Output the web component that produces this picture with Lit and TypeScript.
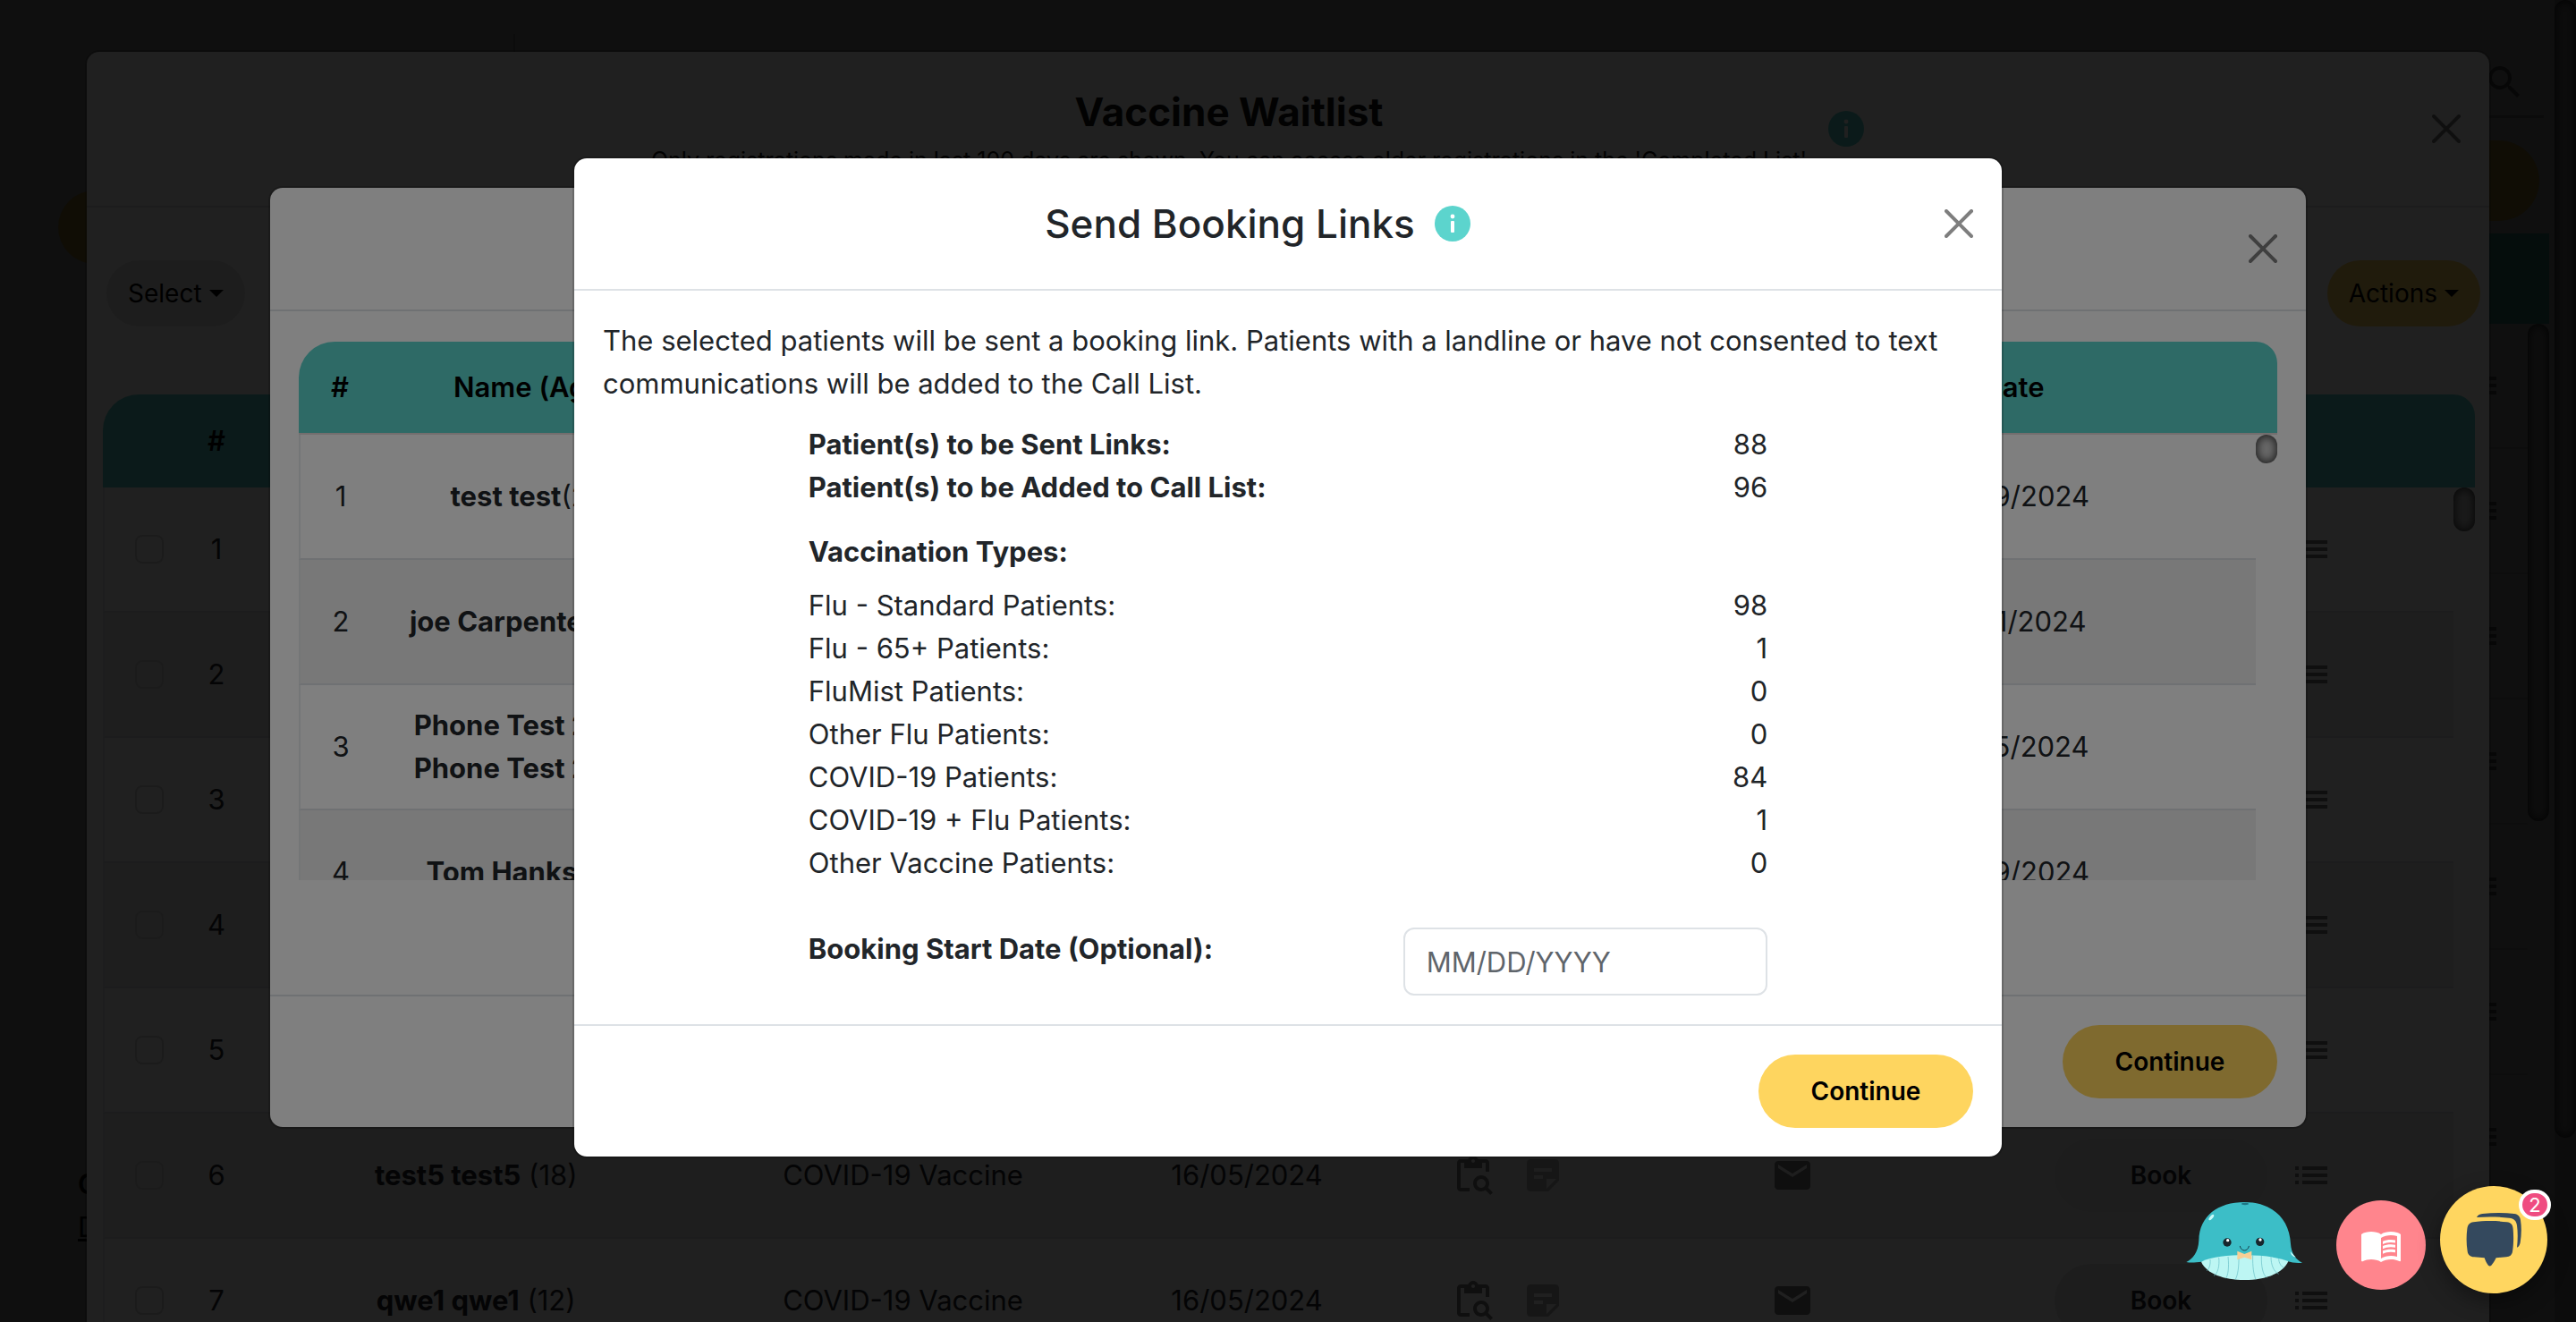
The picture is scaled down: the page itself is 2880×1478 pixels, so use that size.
import { LitElement, html, css, svg, nothing } from "lit";
import { customElement } from "lit/decorators.js";

const PATHS: Record<string, string> = {
  clipboard:
    "M5 5h2v3h10V5h2v5h2V5c0-1.1-.9-2-2-2h-4.18C14.4 1.84 13.3 1 12 1S9.6 1.84 9.18 3H5c-1.1 0-2 .9-2 2v14c0 1.1.9 2 2 2h5v-2H5V5zm7-2c.55 0 1 .45 1 1s-.45 1-1 1-1-.45-1-1 .45-1 1-1zM20.3 18.9c.4-.7.7-1.5.7-2.4 0-2.5-2-4.5-4.5-4.5S12 14 12 16.5s2 4.5 4.5 4.5c.9 0 1.7-.3 2.4-.7l2.7 2.7 1.4-1.4-2.7-2.7zm-3.8.1c-1.4 0-2.5-1.1-2.5-2.5s1.1-2.5 2.5-2.5 2.5 1.1 2.5 2.5-1.1 2.5-2.5 2.5z",
  note: "M19 3H4.99C3.89 3 3 3.9 3 5v14c0 1.1.89 2 1.99 2H15l6-6V5c0-1.1-.9-2-2-2zM7 8h10v2H7V8zm5 6H7v-2h5v2zm2 5.5V14h5.5L14 19.5z",
  mail: "M20 4H4c-1.1 0-1.99.9-1.99 2L2 18c0 1.1.9 2 2 2h16c1.1 0 2-.9 2-2V6c0-1.1-.9-2-2-2zm0 4l-8 5-8-5V6l8 5 8-5v2z",
  list: "M3 13h2v-2H3v2zm0 4h2v-2H3v2zm0-8h2V7H3v2zm4 4h14v-2H7v2zm0 4h14v-2H7v2zM7 7v2h14V7H7z",
  search:
    "M15.5 14h-.79l-.28-.27C15.41 12.59 16 11.11 16 9.5 16 5.91 13.09 3 9.5 3S3 5.91 3 9.5 5.91 16 9.5 16c1.61 0 3.09-.59 4.23-1.57l.27.28v.79l5 4.99L20.49 19l-4.99-5zm-6 0C7.01 14 5 11.99 5 9.5S7.01 5 9.5 5 14 7.01 14 9.5 11.99 14 9.5 14z",
  book: "M21 5c-1.11-.35-2.33-.5-3.5-.5-1.95 0-4.05.4-5.5 1.5-1.45-1.1-3.55-1.5-5.5-1.5S2.45 4.9 1 6v14.65c0 .25.25.5.5.5.1 0 .15-.05.25-.05C3.1 20.45 5.05 20 6.5 20c1.95 0 4.05.4 5.5 1.5 1.35-.85 3.8-1.5 5.5-1.5 1.65 0 3.35.3 4.75 1.05.1.05.15.05.25.05.25 0 .5-.25.5-.5V6c-.6-.45-1.25-.75-2-1zm0 13.5c-1.1-.35-2.3-.5-3.5-.5-1.7 0-4.15.65-5.5 1.5V8c1.35-.85 3.8-1.5 5.5-1.5 1.2 0 2.4.15 3.5.5v11.5zM17.5 10.5c.88 0 1.73.09 2.5.26V9.24c-.79-.15-1.64-.24-2.5-.24-1.7 0-3.24.29-4.5.83v1.66c1.13-.64 2.7-.99 4.5-.99zM13 12.49v1.66c1.13-.64 2.7-.99 4.5-.99.88 0 1.73.09 2.5.26V11.9c-.79-.15-1.64-.24-2.5-.24-1.7 0-3.24.3-4.5.83zM17.5 14.33c-1.7 0-3.24.29-4.5.83v1.66c1.13-.64 2.7-.99 4.5-.99.88 0 1.73.09 2.5.26v-1.52c-.79-.16-1.64-.24-2.5-.24z",
};

const icon = (name: string, cls = "") => svg`
  <svg class="icon ${cls}" viewBox="0 0 24 24" aria-hidden="true"><path d=${PATHS[name]}></path></svg>`;

const closeButton = html`<button class="close" aria-label="Close">
  <svg viewBox="0 0 16 16" aria-hidden="true">
    <path d="M.293.293a1 1 0 0 1 1.414 0L8 6.586 14.293.293a1 1 0 1 1 1.414 1.414L9.414 8l6.293 6.293a1 1 0 0 1-1.414 1.414L8 9.414l-6.293 6.293a1 1 0 0 1-1.414-1.414L6.586 8 .293 1.707a1 1 0 0 1 0-1.414z"></path>
  </svg>
</button>`;

const infoButton = html`<button class="info" aria-label="Information">
  <svg viewBox="0 0 40 40" aria-hidden="true">
    <circle class="disc" cx="20" cy="20" r="20"></circle>
    <circle class="mark" cx="20" cy="12" r="2.4"></circle>
    <rect class="mark" x="18" y="17" width="4" height="13" rx="1"></rect>
  </svg>
</button>`;

interface Waiting {
  n: number;
  name?: string;
  age?: number;
  vaccine?: string;
  date?: string;
}

const WAITLIST: Waiting[] = [
  { n: 1 },
  { n: 2 },
  { n: 3 },
  { n: 4 },
  { n: 5 },
  { n: 6, name: "test5 test5", age: 18, vaccine: "COVID-19 Vaccine", date: "16/05/2024" },
  { n: 7, name: "qwe1 qwe1", age: 12, vaccine: "COVID-19 Vaccine", date: "16/05/2024" },
];

const SELECTED = [
  { n: 1, name: ["test test"], age: "(24)", date: "19/09/2024" },
  { n: 2, name: ["joe Carpenter"], age: " (36)", date: "21/01/2024" },
  { n: 3, name: ["Phone Test 2 (24)", "Phone Test 2 (24)"], age: "", date: "15/05/2024" },
  { n: 4, name: ["Tom Hanks"], age: " (45)", date: "19/09/2024" },
];

const COUNTS = [
  { label: "Flu - Standard Patients:", value: 98 },
  { label: "Flu - 65+ Patients:", value: 1 },
  { label: "FluMist Patients:", value: 0 },
  { label: "Other Flu Patients:", value: 0 },
  { label: "COVID-19 Patients:", value: 84 },
  { label: "COVID-19 + Flu Patients:", value: 1 },
  { label: "Other Vaccine Patients:", value: 0 },
];

const base = css`
  * {
    box-sizing: border-box;
  }
  button {
    font: inherit;
    color: inherit;
    border: 0;
    padding: 0;
    background: none;
  }
  h2,
  h3,
  p,
  dl,
  dd {
    margin: 0;
  }
  .icon {
    width: 48px;
    height: 48px;
    display: block;
    fill: #777;
  }
  .modal {
    background: #fff;
    background-clip: padding-box;
    border: 2px solid rgba(0, 0, 0, 0.175);
    border-radius: 16px;
    display: flex;
    flex-direction: column;
  }
  .header {
    display: flex;
    align-items: center;
    gap: 20px;
    border-bottom: 2px solid #dee2e6;
    padding: 0 32px;
  }
  .title {
    flex: 1;
    display: flex;
    align-items: center;
    justify-content: center;
    gap: 22px;
    font-weight: 500;
    font-size: 44px;
    line-height: 60px;
  }
  .close {
    width: 64px;
    height: 64px;
    margin-right: -16px;
    padding: 16px;
    opacity: 0.5;
  }
  .close svg,
  .info svg {
    display: block;
    width: 100%;
    height: 100%;
    fill: #000;
  }
  .info {
    width: 40px;
    height: 40px;
  }
  .info .disc {
    fill: #5cd4cd;
  }
  .info .mark {
    fill: #fff;
  }
  .footer {
    display: flex;
    justify-content: flex-end;
    border-top: 2px solid #dee2e6;
    padding: 32px;
  }
  .primary {
    width: 240px;
    height: 82px;
    border-radius: 41px;
    background: #fed55f;
    color: #000;
    font-weight: 600;
    font-size: 28px;
  }
  table {
    width: 100%;
    table-layout: fixed;
    border-collapse: separate;
    border-spacing: 0;
  }
  th,
  td {
    padding: 0;
    text-align: center;
  }
  th {
    height: 104px;
    background: #5cd4cd;
    color: #000;
    font-weight: 600;
  }
  th:first-child {
    border-top-left-radius: 40px;
  }
  th:last-child {
    border-top-right-radius: 40px;
  }
  td {
    height: 140px;
    border-bottom: 2px solid #dee2e6;
  }
  td strong {
    font-weight: 700;
  }
  td:first-child {
    border-left: 2px solid #e9ecef;
  }
  tbody tr:nth-child(even) td {
    background: #f0f0f0;
  }
  tbody tr td:last-child {
    background: none;
    border: 0;
  }
  .gutter {
    width: 24px;
  }
  .thumb {
    position: absolute;
    right: 0;
    top: 104px;
    width: 24px;
    height: 32px;
    border-radius: 12px;
    background: #d0d0d0;
    box-shadow: inset 0 0 10px 2px #444;
  }
`;

@customElement("clinic-page")
class ClinicPage extends LitElement {
  static styles = [
    base,
    css`
      :host {
        display: flex;
        height: 100%;
        background: #f4f4f4;
        color: #000;
      }
      .side {
        width: 574px;
        display: flex;
        flex-direction: column;
        justify-content: space-between;
        padding: 213px 0 82px 65px;
      }
      .pill {
        width: 240px;
        height: 90px;
        border-radius: 45px;
        background: #fed55f;
      }
      .side .pill {
        height: 82px;
      }
      .links {
        display: flex;
        flex-direction: column;
        padding-left: 22px;
        line-height: 48px;
      }
      .links strong {
        font-weight: 600;
      }
      .links a {
        color: inherit;
      }
      .main {
        flex: 1;
        display: flex;
        flex-direction: column;
        align-items: stretch;
        position: relative;
        padding-right: 6px;
      }
      .rule {
        width: 2px;
        height: 20px;
        margin-top: 38px;
        background: #ccc;
      }
      .bar {
        height: 74px;
        margin-right: 6px;
        border-bottom: 3px solid #b5b5b5;
        display: flex;
        justify-content: flex-end;
        padding: 10px 20px 0 0;
      }
      .actions {
        display: flex;
        justify-content: flex-end;
        padding: 25px 11px 14px 0;
      }
      .head {
        height: 101px;
        background: #5cd4cd;
      }
      .row {
        height: 140px;
        margin-right: 24px;
        padding-right: 29px;
        border-bottom: 2px solid #dcdcdc;
        display: flex;
        align-items: center;
        justify-content: flex-end;
      }
      .main .thumb {
        top: 362px;
        right: 6px;
        height: 556px;
      }
      .track {
        width: 24px;
        background: #c4c4c4;
        height: 100%;
      }
      .track div {
        height: 1272px;
        border-radius: 12px;
        box-shadow: inset 0 0 10px 2px #444;
      }
    `,
  ];

  render() {
    return html`
      <div class="side">
        <div class="pill"></div>
        <div class="links"><strong>Clinics</strong><a href="#">Details</a></div>
      </div>
      <div class="main">
        <div class="rule"></div>
        <div class="bar">${icon("search")}</div>
        <div class="actions"><div class="pill"></div></div>
        <div class="head"></div>
        ${[1, 2, 3, 4, 5, 6, 7].map(() => html`<div class="row">${icon("list")}</div>`)}
        <div class="thumb"></div>
      </div>
      <div class="track"><div></div></div>
    `;
  }
}

@customElement("vaccine-waitlist")
class VaccineWaitlist extends LitElement {
  static styles = [
    base,
    css`
      :host {
        display: block;
        width: 100%;
      }
      .modal {
        min-height: 1600px;
      }
      .header {
        height: 174px;
      }
      .titles {
        flex: 1;
        display: flex;
        justify-content: center;
        align-items: center;
        gap: 24px;
        text-align: center;
        color: #111;
      }
      .titles h2 {
        font-size: 44px;
        line-height: 64px;
        font-weight: 700;
      }
      .titles div {
        display: flex;
        flex-direction: column;
        gap: 6px;
      }
      .note {
        font-size: 25px;
        line-height: 32px;
      }
      .tools {
        display: flex;
        justify-content: space-between;
        padding: 59px 10px 76px 22px;
        font-size: 28px;
        color: #000;
      }
      .tools button {
        display: flex;
        align-items: center;
        justify-content: center;
        gap: 8px;
        height: 74px;
        padding: 0 24px;
        border-radius: 37px;
        background: #eaeaea;
      }
      .tools .yellow {
        background: #fed55f;
      }
      .caret {
        border: 8px solid transparent;
        border-top-color: #000;
        border-bottom: 0;
      }
      .list {
        position: relative;
        margin: 0 16px 0 18px;
      }
      .check {
        width: 102px;
      }
      .num {
        width: 50px;
      }
      .name {
        width: 20%;
      }
      .vaccine {
        width: 16%;
      }
      .date {
        width: 13%;
      }
      .records {
        width: 9%;
      }
      .mail {
        width: 15%;
      }
      .book {
        width: 246px;
      }
      .more {
        width: 90px;
      }
      .rest {
        width: 114px;
      }
      input {
        appearance: none;
        display: block;
        margin: 0 auto;
        width: 32px;
        height: 32px;
        border: 2px solid #dcdcdc;
        border-radius: 8px;
      }
      td .icon {
        margin: 0 auto;
      }
      .pair {
        display: flex;
        justify-content: center;
        gap: 30px;
      }
      .pair .icon {
        margin: 0;
      }
      .pair .soft {
        fill: #b4b4b4;
      }
      .bookbtn {
        width: 238px;
        height: 82px;
        border-radius: 41px;
        background: #eaeaea;
        font-size: 28px;
        font-weight: 600;
      }
      .thumb {
        height: 49px;
      }
    `,
  ];

  render() {
    return html`
      <section class="modal">
        <header class="header">
          <div class="titles">
            <div>
              <h2>Vaccine Waitlist</h2>
              <p class="note">
                Only registrations made in last 100 days are shown. You can access older registrations in the 'Completed
                List'
              </p>
            </div>
            ${infoButton}
          </div>
          ${closeButton}
        </header>
        <div class="tools">
          <button>Select<span class="caret"></span></button>
          <button class="yellow">Actions<span class="caret"></span></button>
        </div>
        <div class="list">
          <table>
            <thead>
              <tr>
                <th class="check"></th>
                <th class="num">#</th>
                <th class="name"></th>
                <th class="vaccine"></th>
                <th class="date"></th>
                <th class="records"></th>
                <th class="mail"></th>
                <th></th>
                <th class="book"></th>
                <th class="more"></th>
                <th class="rest"></th>
                <th class="gutter"></th>
              </tr>
            </thead>
            <tbody>
              ${WAITLIST.map(
                (r) => html`<tr>
                  <td><input type="checkbox" aria-label="Select row ${r.n}" /></td>
                  <td>${r.n}</td>
                  <td>${r.name ? html`<strong>${r.name}</strong> (${r.age})` : nothing}</td>
                  <td>${r.vaccine}</td>
                  <td>${r.date}</td>
                  <td><div class="pair">${icon("clipboard")}${icon("note", "soft")}</div></td>
                  <td>${icon("mail")}</td>
                  <td></td>
                  <td><button class="bookbtn">Book</button></td>
                  <td>${icon("list")}</td>
                  <td></td>
                  <td></td>
                </tr>`
              )}
            </tbody>
          </table>
          <div class="thumb"></div>
        </div>
      </section>
    `;
  }
}

@customElement("selected-patients")
class SelectedPatients extends LitElement {
  static styles = [
    base,
    css`
      :host {
        display: block;
        width: 100%;
      }
      .header {
        height: 138px;
        justify-content: flex-end;
      }
      .body {
        padding: 34px 32px 128px;
      }
      .list {
        position: relative;
        max-height: 602px;
        overflow: hidden;
      }
      th {
        border-bottom: 2px solid #e6dcdc;
      }
      .num {
        width: 92px;
      }
      .name {
        width: 340px;
      }
      .date {
        width: 542px;
      }
    `,
  ];

  render() {
    return html`
      <section class="modal">
        <header class="header">${closeButton}</header>
        <div class="body">
          <div class="list">
            <table>
              <thead>
                <tr>
                  <th class="num">#</th>
                  <th class="name">Name (Age)</th>
                  <th></th>
                  <th class="date">Date</th>
                  <th class="gutter"></th>
                </tr>
              </thead>
              <tbody>
                ${SELECTED.map(
                  (r) => html`<tr>
                    <td>${r.n}</td>
                    <td>${r.name.map((line, i) => html`${i ? html`<br />` : nothing}<strong>${line}</strong>`)}${r.age}</td>
                    <td></td>
                    <td>${r.date}</td>
                    <td></td>
                  </tr>`
                )}
              </tbody>
            </table>
            <div class="thumb"></div>
          </div>
        </div>
        <footer class="footer"><button class="primary">Continue</button></footer>
      </section>
    `;
  }
}

@customElement("send-links")
class SendLinks extends LitElement {
  static styles = [
    base,
    css`
      :host {
        display: block;
        width: 100%;
      }
      .header {
        height: 148px;
      }
      .body {
        padding: 32px;
      }
      .intro {
        padding-bottom: 20px;
      }
      .summary {
        width: 70%;
        margin: 0 auto;
      }
      .line {
        display: flex;
        justify-content: space-between;
      }
      .strong,
      h3,
      label {
        font-size: inherit;
        font-weight: 700;
      }
      h3 {
        margin: 24px 0 12px;
      }
      .start {
        display: flex;
        justify-content: space-between;
        margin-top: 48px;
      }
      input {
        width: 38%;
        height: 76px;
        padding: 0 24px;
        font: inherit;
        color: #212529;
        border: 2px solid #dee2e6;
        border-radius: 12px;
        background: #fff;
      }
      input::placeholder {
        color: #5f656b;
      }
    `,
  ];

  render() {
    return html`
      <section class="modal" role="dialog" aria-label="Send Booking Links">
        <header class="header">
          <h2 class="title">Send Booking Links ${infoButton}</h2>
          ${closeButton}
        </header>
        <div class="body">
          <p class="intro">
            The selected patients will be sent a booking link. Patients with a landline or have not consented to text
            communications will be added to the Call List.
          </p>
          <div class="summary">
            <dl>
              <div class="line"><dt class="strong">Patient(s) to be Sent Links:</dt><dd>88</dd></div>
              <div class="line"><dt class="strong">Patient(s) to be Added to Call List:</dt><dd>96</dd></div>
            </dl>
            <h3>Vaccination Types:</h3>
            <dl>
              ${COUNTS.map((c) => html`<div class="line"><dt>${c.label}</dt><dd>${c.value}</dd></div>`)}
            </dl>
            <div class="start">
              <label for="start">Booking Start Date (Optional):</label>
              <input id="start" type="text" placeholder="MM/DD/YYYY" />
            </div>
          </div>
        </div>
        <footer class="footer"><button class="primary">Continue</button></footer>
      </section>
    `;
  }
}

@customElement("help-dock")
class HelpDock extends LitElement {
  static styles = [
    base,
    css`
      :host {
        display: flex;
        align-items: flex-end;
      }
      button {
        display: block;
        position: relative;
      }
      .whale {
        width: 132px;
        height: 91px;
        margin: 0 37px 13px 0;
      }
      .whale svg,
      .chat svg {
        display: block;
        width: 100%;
        height: 100%;
      }
      .guide {
        width: 100px;
        height: 100px;
        margin: 0 16px 4px 0;
        border-radius: 50%;
        background: #ff858d;
        display: grid;
        place-items: center;
      }
      .guide .icon {
        fill: #fff;
      }
      .chat {
        width: 120px;
        height: 120px;
        border-radius: 50%;
        background: #ffd660;
        box-shadow: 0 8px 24px rgba(0, 0, 0, 0.4);
      }
      .badge {
        position: absolute;
        right: -4px;
        top: 4px;
        width: 36px;
        height: 34px;
        border: 4px solid #fff;
        border-radius: 17px;
        background: #ef4c81;
        color: #fff;
        font-size: 22px;
        line-height: 26px;
        text-align: center;
      }
    `,
  ];

  render() {
    return html`
      <button class="whale" aria-label="Assistant">
        <svg viewBox="20 66 396 273" aria-hidden="true">
          <path
            fill="#3cbec7"
            d="M24 273C46 262 64 240 66 200C68 118 130 72 219 72C306 72 370 122 374 212C376 242 390 264 413 275C395 278 378 274 362 270L76 272C56 274 40 276 24 273Z"
          ></path>
          <path
            fill="#bdf6f3"
            d="M74 272C110 254 165 250 219 250C275 250 330 256 366 270C350 310 290 333 219 333C150 333 92 312 74 272Z"
          ></path>
          <g fill="none" stroke="#63bcc4" stroke-width="2">
            <path d="M104 264C106 285 98 300 92 302M133 258C136 285 130 312 116 319M164 255C168 290 164 320 156 328M200 252C201 290 196 320 188 332M247 251C246 290 250 315 257 331M276 252C275 285 280 315 294 326M308 256C308 280 316 305 334 313M334 262C334 275 342 288 350 291"></path>
          </g>
          <ellipse cx="221" cy="78" rx="12" ry="3.5" fill="#1d7785"></ellipse>
          <ellipse cx="108" cy="123" rx="5" ry="12" transform="rotate(40 108 123)" fill="#c9fbfa"></ellipse>
          <path d="M373 238C378 243 384 251 392 257C382 256 374 248 373 238Z" fill="#d9ffff"></path>
          <circle cx="161" cy="207" r="14" fill="#17262d"></circle>
          <circle cx="271" cy="205" r="14" fill="#17262d"></circle>
          <circle cx="163" cy="200" r="5" fill="#fff"></circle>
          <circle cx="272" cy="198" r="5" fill="#fff"></circle>
          <path d="M204 220C208 239 230 239 234 220" fill="none" stroke="#17404a" stroke-width="3" stroke-linecap="round"></path>
          <path d="M195 236L219 246L243 236V265L219 257L195 265Z" fill="#f8cf95"></path>
        </svg>
      </button>
      <button class="guide" aria-label="Guide">${icon("book")}</button>
      <button class="chat" aria-label="Messages">
        <svg viewBox="984 78 360 360" aria-hidden="true">
          <g fill="#34495e">
            <path
              d="M1096 199C1130 194 1175 194 1208 199C1222 201 1228 208 1229 222C1231 246 1231 274 1227 298C1225 310 1218 315 1206 316L1172 319C1168 328 1162 338 1156 344C1153 347 1149 347 1146 344C1140 337 1136 328 1133 319L1098 316C1085 315 1078 309 1076 297C1072 272 1072 246 1075 222C1077 207 1083 201 1096 199Z"
            ></path>
            <path
              d="M1107 183C1110 176 1116 172 1126 171C1162 167 1200 167 1233 171C1246 173 1252 180 1254 192C1258 218 1257 244 1253 268C1251 277 1248 282 1242 284C1245 258 1245 232 1242 210C1240 194 1232 187 1216 185C1180 181 1144 180 1107 183Z"
            ></path>
          </g>
        </svg>
        <span class="badge">2</span>
      </button>
    `;
  }
}

@customElement("app-root")
class AppRoot extends LitElement {
  static styles = [
    base,
    css`
      :host {
        display: block;
        position: relative;
        height: 100vh;
        overflow: hidden;
        font-family: Inter, "Liberation Sans", sans-serif;
        font-size: 31px;
        line-height: 48px;
        color: #212529;
      }
      .layer {
        position: absolute;
        inset: 0;
        display: flex;
        justify-content: center;
        align-items: center;
        padding-bottom: 8px;
        background: rgba(0, 0, 0, 0.5);
      }
      .first {
        align-items: flex-start;
        padding: 56px 95px 0;
      }
      .second {
        background: rgba(0, 0, 0, 0.75);
      }
      .wide {
        width: 100%;
        max-width: 2280px;
      }
      .narrow {
        width: 100%;
        max-width: 1600px;
      }
      .dock {
        position: absolute;
        right: 32px;
        bottom: 32px;
      }
    `,
  ];

  render() {
    return html`
      <clinic-page></clinic-page>
      <div class="layer first"><vaccine-waitlist></vaccine-waitlist></div>
      <div class="layer second"><selected-patients class="wide"></selected-patients></div>
      <div class="layer"><send-links class="narrow"></send-links></div>
      <help-dock class="dock"></help-dock>
    `;
  }
}
